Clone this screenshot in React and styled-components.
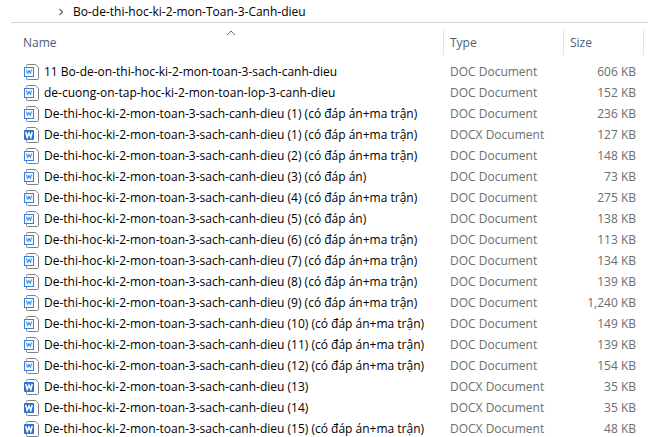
import React from "react";
import styled, { createGlobalStyle } from "styled-components";

const SET = "De-thi-hoc-ki-2-mon-toan-3-sach-canh-dieu";

const files = [
  { name: "11 Bo-de-on-thi-hoc-ki-2-mon-toan-3-sach-canh-dieu", type: "DOC", size: "606 KB" },
  { name: "de-cuong-on-tap-hoc-ki-2-mon-toan-lop-3-canh-dieu", type: "DOC", size: "152 KB" },
  { name: `${SET} (1) (có đáp án+ma trận)`, type: "DOC", size: "236 KB" },
  { name: `${SET} (1) (có đáp án+ma trận)`, type: "DOCX", size: "127 KB" },
  { name: `${SET} (2) (có đáp án+ma trận)`, type: "DOC", size: "148 KB" },
  { name: `${SET} (3) (có đáp án)`, type: "DOC", size: "73 KB" },
  { name: `${SET} (4) (có đáp án+ma trận)`, type: "DOC", size: "275 KB" },
  { name: `${SET} (5) (có đáp án)`, type: "DOC", size: "138 KB" },
  { name: `${SET} (6) (có đáp án+ma trận)`, type: "DOC", size: "113 KB" },
  { name: `${SET} (7) (có đáp án+ma trận)`, type: "DOC", size: "134 KB" },
  { name: `${SET} (8) (có đáp án+ma trận)`, type: "DOC", size: "139 KB" },
  { name: `${SET} (9) (có đáp án+ma trận)`, type: "DOC", size: "1,240 KB" },
  { name: `${SET} (10) (có đáp án+ma trận)`, type: "DOC", size: "149 KB" },
  { name: `${SET} (11) (có đáp án+ma trận)`, type: "DOC", size: "139 KB" },
  { name: `${SET} (12) (có đáp án+ma trận)`, type: "DOC", size: "154 KB" },
  { name: `${SET} (13)`, type: "DOCX", size: "35 KB" },
  { name: `${SET} (14)`, type: "DOCX", size: "35 KB" },
  { name: `${SET} (15) (có đáp án+ma trận)`, type: "DOCX", size: "48 KB" },
];

function WordIcon({ filled }) {
  return (
    <Icon width="16" height="16" viewBox="0 0 16 16" fill="none">
      <path
        d="M2.5 2.5V1.5a1 1 0 0 1 1-1H11.5L14.5 3.5V14.5a1 1 0 0 1-1 1H3.5a1 1 0 0 1-1-1V13"
        fill="#fdfdfd"
        stroke="#7d8288"
      />
      {filled ? (
        <rect x="0" y="3" width="10" height="10" rx="1" fill="#2a6fd6" />
      ) : (
        <rect x="0.5" y="3.5" width="9" height="9" fill="#eef6ff" stroke="#3b82dc" />
      )}
      <path
        d={filled ? "M1.8 5L3.2 10.4L5 6L6.8 10.4L8.2 5" : "M2.5 5.6L3.6 9.6L5 6.4L6.4 9.6L7.5 5.6"}
        stroke={filled ? "#ffffff" : "#3b82dc"}
        strokeWidth={filled ? 1.5 : 1}
      />
    </Icon>
  );
}

export default function App() {
  return (
    <Explorer>
      <GlobalStyle />
      <AddressBar aria-label="Path">
        <Chevron width="6" height="8" viewBox="0 0 6 8" fill="none">
          <path d="M1.5 1L4.5 4L1.5 7" stroke="#6a6a6a" strokeWidth="1.3" />
        </Chevron>
        <Crumb href="#folder">Bo-de-thi-hoc-ki-2-mon-Toan-3-Canh-dieu</Crumb>
      </AddressBar>
      <FileTable>
        <colgroup>
          <col />
          <Col $width={120} />
          <Col $width={80} />
        </colgroup>
        <thead>
          <tr>
            <HeadCell aria-sort="ascending">
              <SortArrow width="10" height="6" viewBox="0 0 10 6" fill="none">
                <path d="M1 5L5 1L9 5" stroke="#6f6f6f" />
              </SortArrow>
              <HeadButton>Name</HeadButton>
            </HeadCell>
            <HeadCell>
              <HeadButton>Type</HeadButton>
            </HeadCell>
            <HeadCell>
              <HeadButton>Size</HeadButton>
            </HeadCell>
          </tr>
        </thead>
        <tbody>
          {files.map((file) => (
            <tr key={file.name + file.type}>
              <NameCell>
                <FileName>
                  <WordIcon filled={file.type === "DOCX"} />
                  {file.name}
                </FileName>
              </NameCell>
              <Cell>{file.type} Document</Cell>
              <Cell $right>{file.size}</Cell>
            </tr>
          ))}
        </tbody>
      </FileTable>
    </Explorer>
  );
}

const GlobalStyle = createGlobalStyle`
  * {
    box-sizing: border-box;
  }

  body {
    margin: 0;
    background-color: #ffffff;
    overflow: hidden;
  }
`;

const Explorer = styled.main`
  padding-left: 11px;
  font-family: "Open Sans", "Noto Sans", sans-serif;
  font-size: 12px;
  line-height: 20px;
  color: #000000;
`;

const AddressBar = styled.nav`
  display: flex;
  align-items: center;
  gap: 9px;
  height: 23px;
  padding-top: 2px;
  padding-left: 47px;
  border-bottom: 1px solid #d4d4d4;
`;

const Chevron = styled.svg`
  flex: none;
`;

const Crumb = styled.a`
  color: inherit;
  text-decoration: none;
`;

const FileTable = styled.table`
  width: calc(100% - 10px);
  margin-left: 6px;
  table-layout: fixed;
  border-collapse: separate;
  border-spacing: 0;
`;

const Col = styled.col`
  width: ${({ $width }) => $width}px;
`;

const HeadCell = styled.th`
  position: relative;
  height: 38px;
  padding: 7px 0 6px;
  font-weight: normal;
  text-align: left;
`;

const HeadButton = styled.button`
  display: block;
  width: 100%;
  height: 25px;
  padding: 0 6px;
  border: none;
  border-right: 1px solid #e2e4e6;
  background: none;
  font: inherit;
  color: #4c607a;
  text-align: left;
`;

const SortArrow = styled.svg`
  position: absolute;
  top: 7px;
  left: 50%;
  transform: translateX(-50%);
`;

const Cell = styled.td`
  height: 21px;
  padding: 0 8px 0 6px;
  color: #6d6d6d;
  text-align: ${({ $right }) => ($right ? "right" : "left")};
  white-space: nowrap;
`;

const NameCell = styled(Cell)`
  padding-left: 7px;
  color: #000000;
`;

const FileName = styled.div`
  display: flex;
  align-items: center;
  gap: 4px;
`;

const Icon = styled.svg`
  flex: none;
`;
